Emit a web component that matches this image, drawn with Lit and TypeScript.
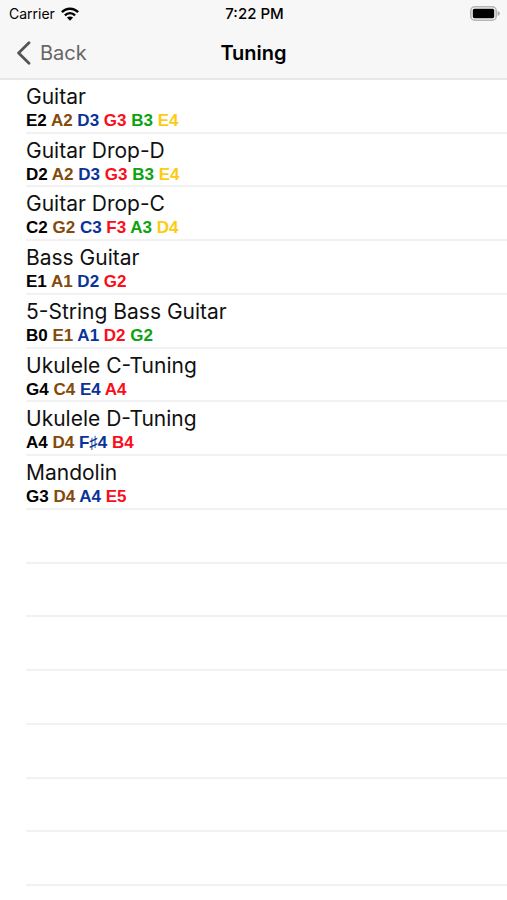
import { LitElement, html, css } from "lit";
import { customElement, property } from "lit/decorators.js";

interface Tuning {
  name: string;
  notes: string[];
}

const TUNINGS: Tuning[] = [
  { name: "Guitar", notes: ["E2", "A2", "D3", "G3", "B3", "E4"] },
  { name: "Guitar Drop-D", notes: ["D2", "A2", "D3", "G3", "B3", "E4"] },
  { name: "Guitar Drop-C", notes: ["C2", "G2", "C3", "F3", "A3", "D4"] },
  { name: "Bass Guitar", notes: ["E1", "A1", "D2", "G2"] },
  { name: "5-String Bass Guitar", notes: ["B0", "E1", "A1", "D2", "G2"] },
  { name: "Ukulele C-Tuning", notes: ["G4", "C4", "E4", "A4"] },
  { name: "Ukulele D-Tuning", notes: ["A4", "D4", "F♯4", "B4"] },
  { name: "Mandolin", notes: ["G3", "D4", "A4", "E5"] },
];

const EMPTY_ROWS = 7;

@customElement("status-bar")
export class StatusBar extends LitElement {
  static styles = css`
    :host {
      display: grid;
      grid-template-columns: 1fr auto 1fr;
      align-items: center;
      height: 27px;
      padding: 0 7px 0 9px;
      font-size: 14px;
      line-height: 18px;
    }
    .carrier {
      display: flex;
      align-items: center;
      gap: 6px;
    }
    .time {
      font-size: 15px;
      font-weight: 500;
    }
    .battery {
      justify-self: end;
    }
    svg {
      display: block;
    }
  `;

  render() {
    return html`
      <div class="carrier">
        <span>Carrier</span>
        <svg width="18" height="14" viewBox="0 0 18 14" aria-label="Wi-Fi">
          <g fill="none" stroke="#000" stroke-width="2.4">
            <path d="M0.9 5.2C5.4 0.5 12.6 0.5 17.1 5.2" />
            <path d="M3.9 8.3C6.8 5.4 11.2 5.4 14.1 8.3" />
          </g>
          <path d="M9 13.8L5.9 10.6C7.6 9 10.4 9 12.1 10.6Z" />
        </svg>
      </div>
      <span class="time">7:22 PM</span>
      <svg class="battery" width="30" height="15" viewBox="0 0 30 15" aria-label="Battery full">
        <rect x="0.8" y="0.8" width="25.4" height="13.4" rx="4" fill="#f7f7f7" stroke="#b4b4b4" stroke-width="1.6" />
        <rect x="2.8" y="2.8" width="21.4" height="9.4" rx="1.6" />
        <path d="M27.6 5Q29.8 5.8 29.8 7.5T27.6 10Z" fill="#a8a8a8" />
      </svg>
    `;
  }
}

@customElement("nav-bar")
export class NavBar extends LitElement {
  static styles = css`
    :host {
      display: grid;
      grid-template-columns: 1fr auto 1fr;
      align-items: center;
      height: 51px;
    }
    .back {
      justify-self: start;
      display: flex;
      align-items: center;
      gap: 9px;
      padding: 0 0 0 16px;
      border: 0;
      background: none;
      color: #666;
      font: inherit;
      font-size: 20px;
      line-height: 28px;
    }
    .title {
      margin: 0;
      font-size: 20px;
      line-height: 28px;
      font-weight: 600;
    }
  `;

  render() {
    return html`
      <button class="back" type="button">
        <svg width="15" height="24" viewBox="0 0 15 24" aria-hidden="true">
          <path d="M13 1.8L2.6 12L13 22.2" fill="none" stroke="#555" stroke-width="2.8" stroke-linecap="round" stroke-linejoin="round" />
        </svg>
        Back
      </button>
      <h1 class="title">Tuning</h1>
    `;
  }
}

@customElement("tuning-row")
export class TuningRow extends LitElement {
  @property({ attribute: false }) tuning!: Tuning;

  static styles = css`
    :host {
      display: block;
    }
    .row {
      display: block;
      width: 100%;
      padding: 3px 0 0;
      border: 0;
      background: none;
      color: #000;
      font: inherit;
      text-align: left;
    }
    .name {
      display: block;
      color: #111;
      font-size: 21px;
      line-height: 27px;
    }
    .notes {
      display: block;
      font-family: "Liberation Sans", Arial, sans-serif;
      font-size: 17px;
      line-height: 21px;
      font-weight: 700;
    }
    .note-1 { color: #000; }
    .note-2 { color: #834a0b; }
    .note-3 { color: #0a3399; }
    .note-4 { color: #fb0d1b; }
    .note-5 { color: #0ba30f; }
    .note-6 { color: #fecb14; }
  `;

  render() {
    return html`
      <button class="row" type="button">
        <span class="name">${this.tuning.name}</span>
        <span class="notes">${this.tuning.notes.map(
          (note, i) => html`<span class="note-${i + 1}">${note}</span> `
        )}</span>
      </button>
    `;
  }
}

@customElement("app-root")
export class AppRoot extends LitElement {
  static styles = css`
    :host {
      display: flex;
      flex-direction: column;
      min-height: 100vh;
      background: #fff;
      color: #000;
      font-family: Inter, "Liberation Sans", sans-serif;
    }
    .header {
      background: #f7f7f7;
      border-bottom: 2px solid #e8e8e8;
    }
    .list {
      flex: 1;
      display: grid;
      grid-auto-rows: minmax(53px, 1fr);
      margin: 0;
      padding: 0 0 14px 26px;
      list-style: none;
    }
    .item {
      box-sizing: border-box;
      border-bottom: 2px solid #f2f2f2;
    }
  `;

  render() {
    return html`
      <header class="header">
        <status-bar></status-bar>
        <nav-bar></nav-bar>
      </header>
      <ul class="list">
        ${TUNINGS.map(
          (tuning) => html`<li class="item"><tuning-row .tuning=${tuning}></tuning-row></li>`
        )}
        ${Array.from({ length: EMPTY_ROWS }, () => html`<li class="item" aria-hidden="true"></li>`)}
      </ul>
    `;
  }
}
